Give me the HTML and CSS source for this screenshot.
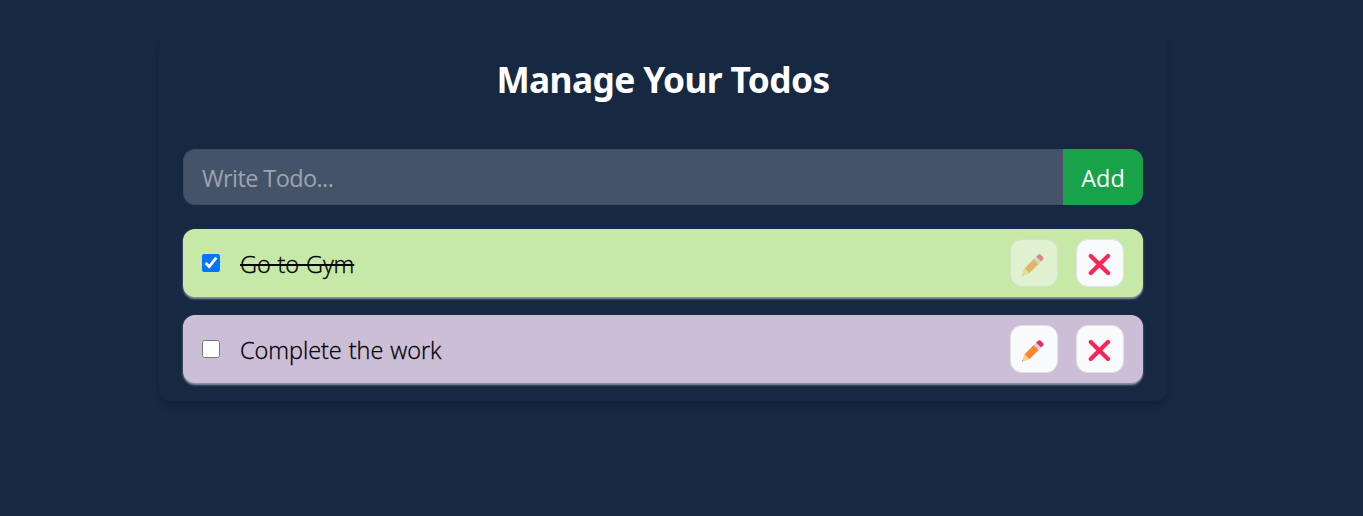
FILE: index.html
```html
<!DOCTYPE html>
<html lang="en">
<head>
<meta charset="utf-8">
<title>Manage Your Todos</title>
<link rel="stylesheet" href="styles.css">
</head>
<body>
<svg width="0" height="0" class="symbols" aria-hidden="true">
  <symbol id="pencil" viewBox="0 0 24 24">
    <path d="M1.2 22.4 3 15.8 7.9 20.7Z" fill="#ffce7c"/>
    <path d="M1.2 22.4 1.5 21.3 2.3 22.1Z" fill="#45404a"/>
    <path d="M3.4 15.4 13 5.8 17.9 10.7 8.3 20.3Z" fill="#ff822d"/>
    <path d="M12.6 6.2 15.1 3.7 20 8.6 17.5 11.1Z" fill="#d3d3d8"/>
    <path d="M15.1 3.7 17 1.8Q18.4.5 19.8 1.8L21.9 3.9Q23.2 5.3 21.9 6.7L20 8.6Z" fill="#f8265e"/>
  </symbol>
  <symbol id="cross" viewBox="0 0 24 24">
    <path d="M3.8 2.9 21 20.1M21 2.9 3.8 20.1" fill="none" stroke="#f92459" stroke-width="4.2" stroke-linecap="round"/>
  </symbol>
</svg>
<main class="card">
  <h1 class="title">Manage Your Todos</h1>
  <form class="todo-form">
    <input class="todo-input" type="text" placeholder="Write Todo...">
    <button class="add" type="button">Add</button>
  </form>
  <div class="list">
    <div class="item done">
      <input class="check" type="checkbox" checked>
      <span class="text"><span class="label">Go to Gym</span></span>
      <button class="action" type="button" disabled aria-label="Edit"><svg class="icon" viewBox="0 0 24 24"><use href="#pencil"/></svg></button>
      <button class="action" type="button" aria-label="Delete"><svg class="icon" viewBox="0 0 24 24"><use href="#cross"/></svg></button>
    </div>
    <div class="item">
      <input class="check" type="checkbox">
      <span class="text"><span class="label">Complete the work</span></span>
      <button class="action" type="button" aria-label="Edit"><svg class="icon" viewBox="0 0 24 24"><use href="#pencil"/></svg></button>
      <button class="action" type="button" aria-label="Delete"><svg class="icon" viewBox="0 0 24 24"><use href="#cross"/></svg></button>
    </div>
  </div>
</main>
</body>
</html>
```
FILE: styles.css
```css
* { box-sizing: border-box; }
body {
  margin: 0;
  padding-top: 32px;
  min-height: 516px;
  background: #172842;
  font-family: "Segoe UI", "Open Sans", "Noto Sans", sans-serif;
  font-size: 23.5px;
  line-height: 36px;
}
.symbols { position: absolute; }
.card {
  width: 1008px;
  height: 369px;
  margin-left: 159px;
  padding: 23px 24px 18px;
  border-radius: 12px;
  box-shadow: 0 6px 9px -1.5px rgba(0,0,0,.1), 0 3px 6px -3px rgba(0,0,0,.1);
}
.title {
  margin: 0 0 46px;
  color: #fff;
  font-family: "Segoe UI", "Noto Sans", sans-serif;
  font-size: 35.3px;
  line-height: 48px;
  font-weight: 700;
  letter-spacing: -.6px;
  text-align: center;
}
.todo-form { display: flex; height: 56px; margin-bottom: 24px; }
.todo-input {
  flex: 1;
  min-width: 0;
  padding: 1px 18px 0;
  border: 1px solid #3d4b60;
  border-right-color: #55506f;
  border-radius: 12px 0 0 12px;
  background: #455369;
  color: #fff;
  font: inherit;
  letter-spacing: -.6px;
}
.todo-input::placeholder { color: #9ca3af; opacity: 1; }
.add {
  width: 80px;
  padding: 1px 0 0;
  border: 0;
  border-radius: 0 12px 12px 0;
  background: #18a34a;
  color: #fff;
  font: inherit;
}
.list { display: grid; gap: 18px; }
.item {
  display: flex;
  align-items: center;
  height: 68px;
  padding: 0 19px;
  border-radius: 12px;
  background: #ccbed7;
  color: #000;
  font-weight: 300;
  letter-spacing: -.05px;
  word-spacing: 1px;
  -webkit-text-stroke: .3px #000;
  box-shadow: 0 1.5px 2px rgba(255,255,255,.5);
}
.item.done { background: #c6e9a7; letter-spacing: -.1px; }
.check { width: 18px; height: 18px; margin: 0 20px 0 0; }
.text { flex: 1; padding-top: 2px; }
.done .label { text-decoration: line-through 2px #000; }
.action {
  display: flex;
  align-items: center;
  justify-content: center;
  width: 48px;
  height: 48px;
  margin-left: 18px;
  padding: 3px 2px 0 0;
  border: 1px solid #e1e1e6;
  border-radius: 12px;
  background: #f9fafc;
}
.action:disabled { opacity: .5; }
.icon { width: 24px; height: 24px; }
```
